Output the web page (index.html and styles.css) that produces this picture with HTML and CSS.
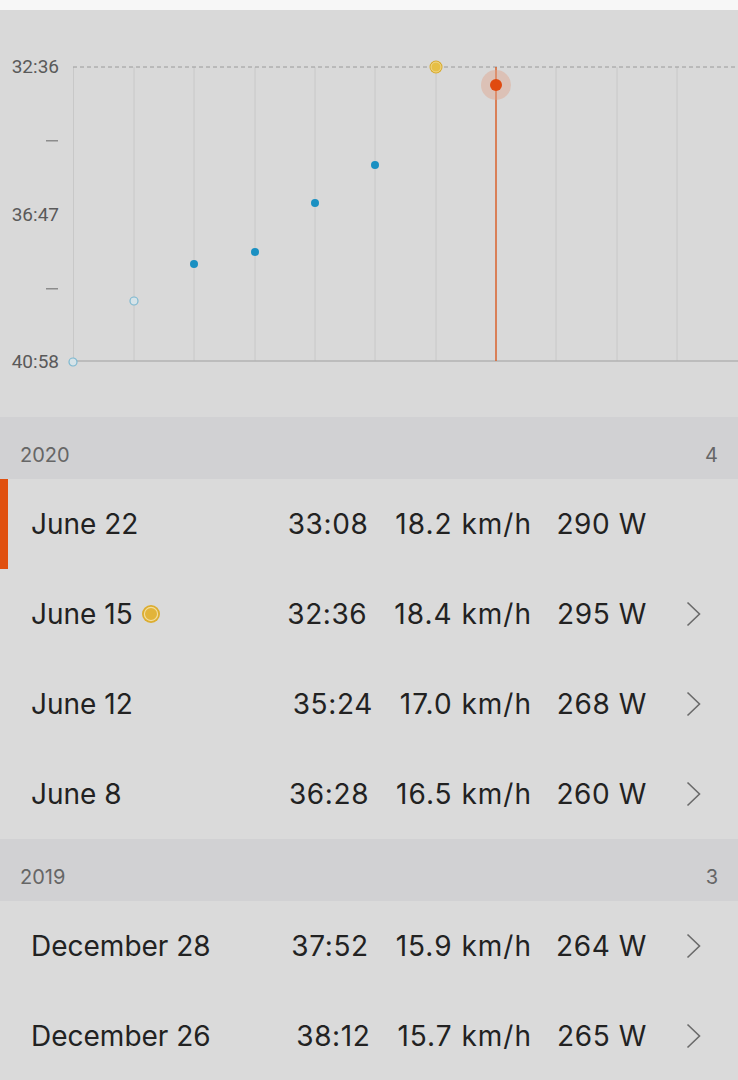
FILE: index.html
```html
<!DOCTYPE html>
<html lang="en">
<head>
    <meta charset="UTF-8">
    <meta name="viewport" content="width=device-width, initial-scale=1.0">
    <title>Segment History</title>
    <link rel="stylesheet" href="styles.css">
</head>
<body>
    <div class="topbar"></div>

    <!-- Time chart -->
    <section class="chart">
        <div class="axis">
            <span>32:36</span>
            <span class="tick"></span>
            <span>36:47</span>
            <span class="tick"></span>
            <span>40:58</span>
        </div>
        <svg class="plot" width="665" height="407" viewBox="0 0 665 407">
            <g stroke="#c8c8c8" stroke-width="1">
                <line x1="0.5" y1="57" x2="0.5" y2="351"/>
                <line x1="61" y1="57" x2="61" y2="351"/>
                <line x1="121" y1="57" x2="121" y2="351"/>
                <line x1="182" y1="57" x2="182" y2="351"/>
                <line x1="242" y1="57" x2="242" y2="351"/>
                <line x1="302" y1="57" x2="302" y2="351"/>
                <line x1="363" y1="57" x2="363" y2="351"/>
                <line x1="483" y1="57" x2="483" y2="351"/>
                <line x1="544" y1="57" x2="544" y2="351"/>
                <line x1="604" y1="57" x2="604" y2="351"/>
            </g>
            <line x1="0" y1="57" x2="665" y2="57" stroke="#9a9a9a" stroke-width="1" stroke-dasharray="4 3"/>
            <line x1="0" y1="351" x2="665" y2="351" stroke="#b2b2b2" stroke-width="1.5"/>
            <line x1="423" y1="57" x2="423" y2="351" stroke="#d8622c" stroke-width="1.5"/>

            <!-- older efforts -->
            <circle cx="0" cy="352" r="4" fill="#d6e3e8" stroke="#7db8d0" stroke-width="1.2"/>
            <circle cx="61" cy="291" r="4" fill="#d6e3e8" stroke="#7db8d0" stroke-width="1.2"/>
            <circle cx="121" cy="254" r="4" fill="#1a90c2"/>
            <circle cx="182" cy="242" r="4" fill="#1a90c2"/>
            <circle cx="242" cy="193" r="4" fill="#1a90c2"/>
            <circle cx="302" cy="155" r="4" fill="#1a90c2"/>

            <!-- best -->
            <circle cx="363" cy="57" r="6.5" fill="#d9ab2c"/>
            <circle cx="363" cy="57" r="5" fill="#e6bf45" stroke="#f0d88e" stroke-width="1"/>

            <!-- current -->
            <circle cx="423" cy="75" r="15" fill="#e0a48c" fill-opacity="0.45"/>
            <circle cx="423" cy="75" r="6" fill="#e04a10"/>
        </svg>
    </section>

    <section class="group">
        <header class="group-head"><span>2020</span><span>4</span></header>
        <div class="row is-current">
            <span class="date">June 22</span>
            <span class="time">33:08</span>
            <span class="speed">18.2 km/h</span>
            <span class="power">290 W</span>
            <span class="go"></span>
        </div>
        <div class="row">
            <span class="date">June 15
                <svg class="best" width="20" height="20" viewBox="0 0 20 20">
                    <circle cx="10" cy="10" r="9" fill="#dcad30"/>
                    <circle cx="10" cy="10" r="6.6" fill="#e2b43a" stroke="#f3dd9c" stroke-width="1.2"/>
                </svg>
            </span>
            <span class="time">32:36</span>
            <span class="speed">18.4 km/h</span>
            <span class="power">295 W</span>
            <span class="go"><svg width="15" height="26" viewBox="0 0 15 26"><path d="M1.5 1.5 L13.5 13 L1.5 24.5" fill="none" stroke="#6a6a6a" stroke-width="1.6"/></svg></span>
        </div>
        <div class="row">
            <span class="date">June 12</span>
            <span class="time">35:24</span>
            <span class="speed">17.0 km/h</span>
            <span class="power">268 W</span>
            <span class="go"><svg width="15" height="26" viewBox="0 0 15 26"><path d="M1.5 1.5 L13.5 13 L1.5 24.5" fill="none" stroke="#6a6a6a" stroke-width="1.6"/></svg></span>
        </div>
        <div class="row">
            <span class="date">June 8</span>
            <span class="time">36:28</span>
            <span class="speed">16.5 km/h</span>
            <span class="power">260 W</span>
            <span class="go"><svg width="15" height="26" viewBox="0 0 15 26"><path d="M1.5 1.5 L13.5 13 L1.5 24.5" fill="none" stroke="#6a6a6a" stroke-width="1.6"/></svg></span>
        </div>
    </section>

    <section class="group">
        <header class="group-head"><span>2019</span><span>3</span></header>
        <div class="row">
            <span class="date">December 28</span>
            <span class="time">37:52</span>
            <span class="speed">15.9 km/h</span>
            <span class="power">264 W</span>
            <span class="go"><svg width="15" height="26" viewBox="0 0 15 26"><path d="M1.5 1.5 L13.5 13 L1.5 24.5" fill="none" stroke="#6a6a6a" stroke-width="1.6"/></svg></span>
        </div>
        <div class="row">
            <span class="date">December 26</span>
            <span class="time">38:12</span>
            <span class="speed">15.7 km/h</span>
            <span class="power">265 W</span>
            <span class="go"><svg width="15" height="26" viewBox="0 0 15 26"><path d="M1.5 1.5 L13.5 13 L1.5 24.5" fill="none" stroke="#6a6a6a" stroke-width="1.6"/></svg></span>
        </div>
    </section>
</body>
</html>
```

FILE: styles.css
```css
/* Basic styles */
body {
    margin: 0;
    background-color: #dadada;
    color: #222;
    font-family: Inter, 'Liberation Sans', sans-serif;
    overflow: hidden;
}
.topbar {
    height: 10px;
    background-color: #f7f7f7;
}

/* Chart */
.chart {
    display: flex;
    height: 407px;
    background-color: #d9d9d9;
}
.axis {
    width: 73px;
    height: 315px;
    margin-top: 47px;
    padding-right: 14px;
    box-sizing: border-box;
    flex: none;
    display: flex;
    flex-direction: column;
    justify-content: space-between;
    align-items: flex-end;
    font-family: Roboto, 'Liberation Sans', sans-serif;
    font-size: 19px;
    line-height: 20px;
    color: #5a5a5a;
}
.axis .tick {
    width: 12px;
    height: 20px;
    margin-right: 1px;
    background: linear-gradient(#8c8c8c, #8c8c8c) center / 12px 1.5px no-repeat;
}
.plot {
    display: block;
    overflow: visible;
}

/* List */
.group-head {
    height: 62px;
    padding: 0 20px 14px;
    box-sizing: border-box;
    display: flex;
    justify-content: space-between;
    align-items: flex-end;
    background-color: #d1d1d3;
    font-size: 20px;
    line-height: 20px;
    color: #666;
}
.row {
    height: 90px;
    padding-left: 31px;
    display: flex;
    align-items: center;
    font-size: 28px;
}
.row.is-current {
    box-shadow: inset 8px 0 0 #e0500f;
}
.date {
    flex: 1;
    display: flex;
    align-items: center;
    gap: 8px;
}
.best { display: block; }
.time, .power { letter-spacing: 0.6px; }
.time { margin-right: 27px; }
.speed { letter-spacing: 1px; }
.power {
    width: 115px;
    text-align: right;
}
.go {
    width: 91px;
    padding-left: 39px;
    box-sizing: border-box;
    display: flex;
    align-items: center;
}
.go svg { display: block; }
```
